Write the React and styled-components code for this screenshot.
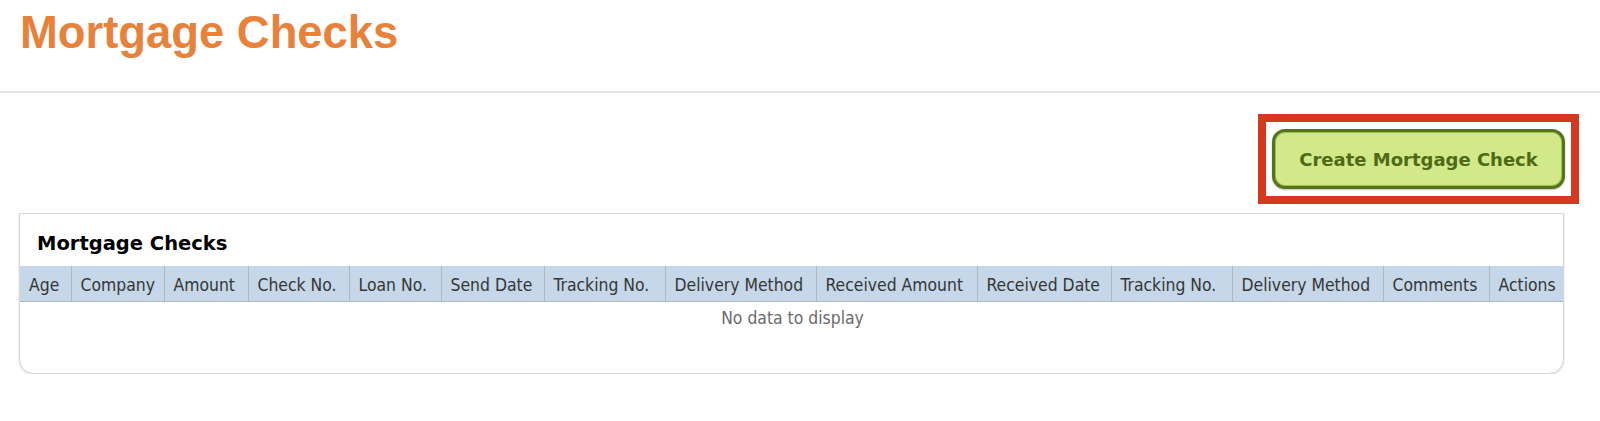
import React from 'react';
import styled, { createGlobalStyle } from 'styled-components';

const GlobalStyle = createGlobalStyle`
    body {
        margin: 0;
        background: #ffffff;
        font-family: "DejaVu Sans Condensed", "DejaVu Sans", sans-serif;
    }
`;

const columns = [
    { label: 'Age', width: 51 },
    { label: 'Company', width: 93 },
    { label: 'Amount', width: 84 },
    { label: 'Check No.', width: 101 },
    { label: 'Loan No.', width: 92 },
    { label: 'Send Date', width: 103 },
    { label: 'Tracking No.', width: 121 },
    { label: 'Delivery Method', width: 151 },
    { label: 'Received Amount', width: 161 },
    { label: 'Received Date', width: 134 },
    { label: 'Tracking No.', width: 121 },
    { label: 'Delivery Method', width: 151 },
    { label: 'Comments', width: 106 },
    { label: 'Actions', width: 76 },
];

const Page = styled.div`
    width: 1600px;
`;

const PageHeader = styled.header`
    height: 93px;
    box-sizing: border-box;
    padding: 7px 18px 0 20px;
    border-bottom: 2px solid #e6e6e6;
`;

const PageTitle = styled.h1`
    margin: 0;
    font-family: "Liberation Sans", Arial, sans-serif;
    font-size: 45.4px;
    line-height: 52px;
    font-weight: 700;
    color: #e8813a;
`;

const Toolbar = styled.div`
    display: flex;
    justify-content: flex-end;
    padding: 21px 21px 0 0;
`;

const Highlight = styled.div`
    border: 8px solid #d4391f;
    padding: 7px 6px;
`;

const CreateButton = styled.button`
    width: 293px;
    height: 60px;
    box-sizing: border-box;
    border: 3px solid #56721b;
    border-radius: 13px;
    background: #d2e98a;
    color: #4f6a15;
    font-family: "DejaVu Sans", Verdana, sans-serif;
    font-weight: 700;
    font-size: 18px;
    cursor: pointer;
    box-shadow: inset 0 0 0 1px #9fbf55, 0 1px 2px rgba(0, 0, 0, 0.25);
`;

const Card = styled.section`
    margin: 9px 36px 0 19px;
    border: 1px solid #d6d6d6;
    border-radius: 0 0 15px 15px;
    box-shadow: 0 1px 2px rgba(0, 0, 0, 0.18);
    min-height: 161px;
    box-sizing: border-box;
    overflow: hidden;
`;

const CardTitle = styled.h2`
    margin: 0;
    padding: 18px 17px 11px;
    font-family: "DejaVu Sans", Verdana, sans-serif;
    font-size: 19.5px;
    line-height: 23px;
    font-weight: 700;
    color: #000000;
`;

const Table = styled.table`
    width: 100%;
    border-collapse: collapse;
    table-layout: fixed;
`;

const Col = styled.col`
    width: ${p => p.$width}px;
`;

const HeadCell = styled.th`
    padding: 9px 9px 6px;
    height: 35px;
    box-sizing: border-box;
    background: #c5d7e8;
    border-right: 1px solid #aeb8c2;
    border-bottom: 1px solid #aeb8c2;
    font-family: "DejaVu Sans Condensed", "DejaVu Sans", sans-serif;
    font-stretch: condensed;
    font-weight: 400;
    font-size: 17.4px;
    line-height: 20px;
    color: #363636;
    text-align: left;
    white-space: nowrap;

    &:last-child {
        border-right: none;
    }
`;

const EmptyCell = styled.td`
    padding: 6px 0 5px;
    text-align: center;
    font-family: "DejaVu Sans Condensed", "DejaVu Sans", sans-serif;
    font-stretch: condensed;
    font-size: 17.4px;
    line-height: 20px;
    color: #6b6b6b;
`;

function App() {
    return (
        <Page>
            <GlobalStyle />
            <PageHeader>
                <PageTitle>Mortgage Checks</PageTitle>
            </PageHeader>
            <Toolbar>
                <Highlight>
                    <CreateButton>Create Mortgage Check</CreateButton>
                </Highlight>
            </Toolbar>
            <Card>
                <CardTitle>Mortgage Checks</CardTitle>
                <Table>
                    <colgroup>
                        {columns.map((c, i) => <Col key={i} $width={c.width} />)}
                    </colgroup>
                    <thead>
                        <tr>
                            {columns.map((c, i) => <HeadCell key={i}>{c.label}</HeadCell>)}
                        </tr>
                    </thead>
                    <tbody>
                        <tr>
                            <EmptyCell colSpan={columns.length}>No data to display</EmptyCell>
                        </tr>
                    </tbody>
                </Table>
            </Card>
        </Page>
    );
}

export default App;
